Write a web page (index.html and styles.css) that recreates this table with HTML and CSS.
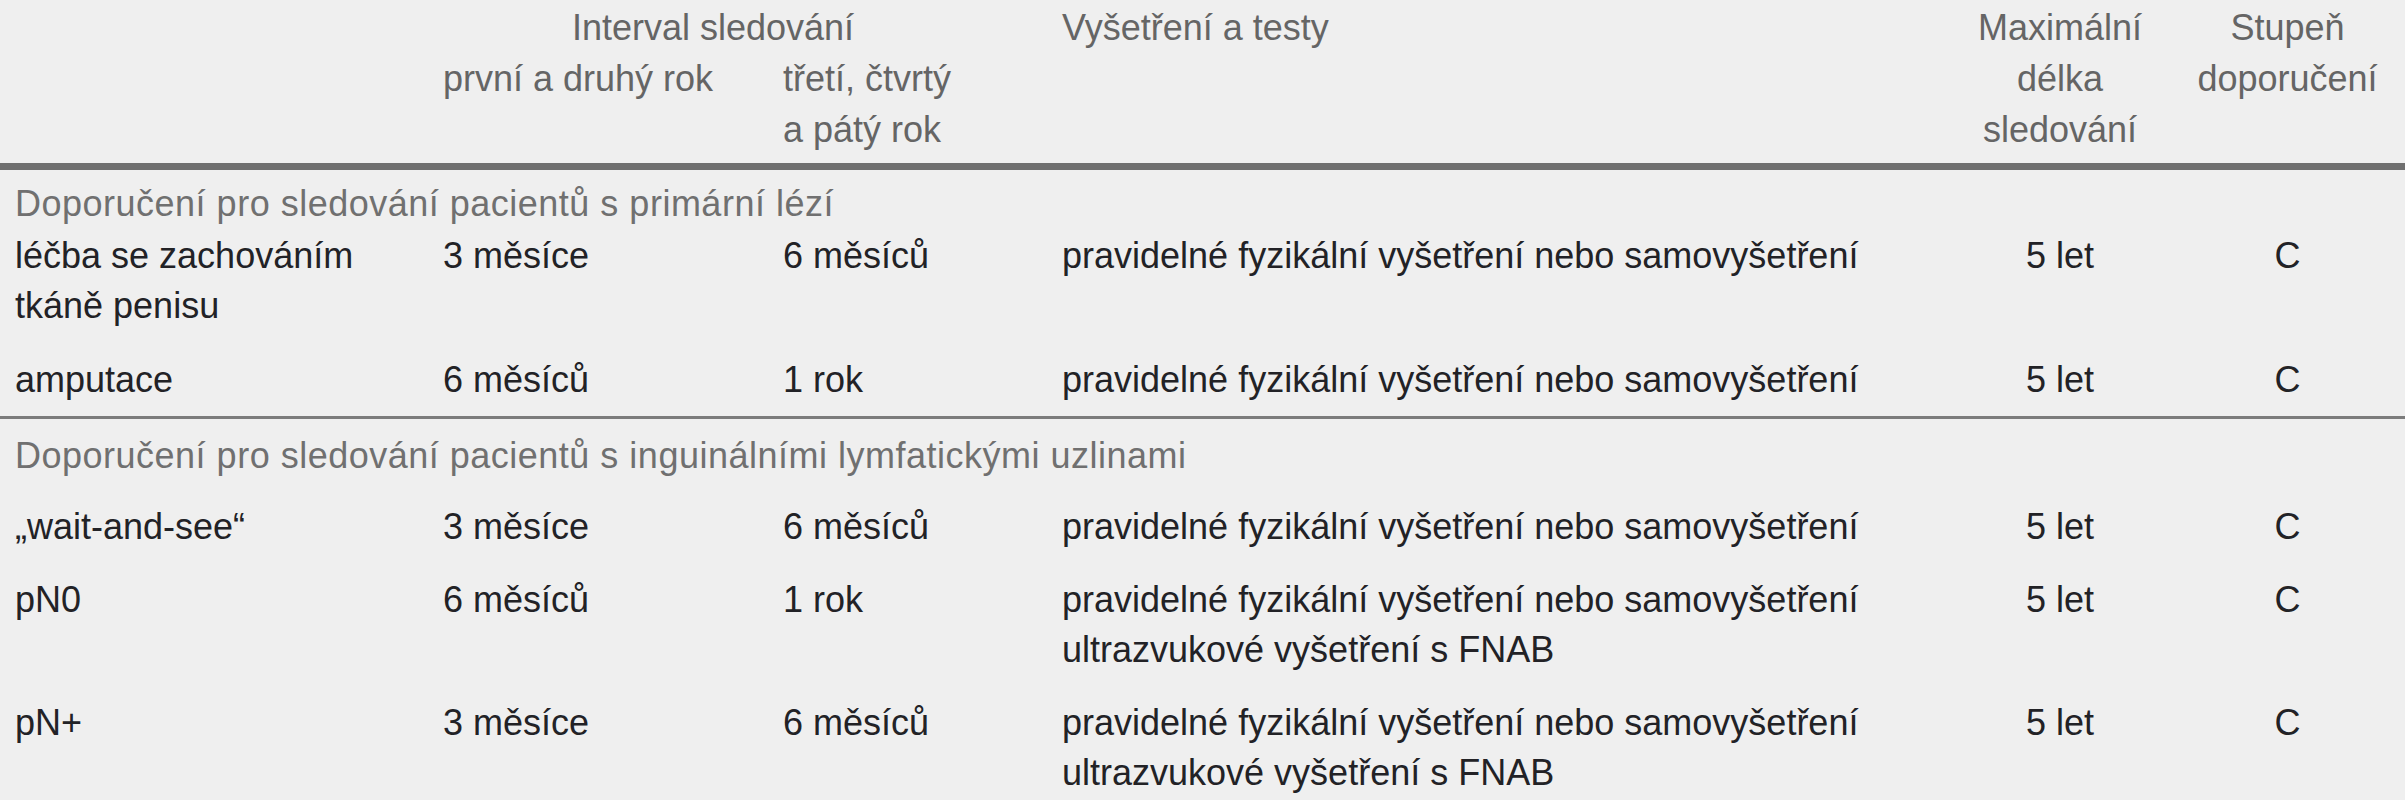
FILE: index.html
```html
<!DOCTYPE html>
<html lang="cs">
<head>
<meta charset="utf-8">
<title>Doporučení pro sledování</title>
<link rel="stylesheet" href="styles.css">
</head>
<body>
<table class="follow">
  <colgroup>
    <col class="c1"><col class="c2"><col class="c3"><col class="c4"><col class="c5"><col class="c6">
  </colgroup>
  <thead>
    <tr>
      <th rowspan="2" class="h-bottom"></th>
      <th colspan="2" class="h-top h-interval">Interval sledování</th>
      <th rowspan="2" class="h-top h-bottom">Vyšetření a testy</th>
      <th rowspan="2" class="h-top h-bottom h-center">Maximální<br>délka<br>sledování</th>
      <th rowspan="2" class="h-top h-bottom h-center h-last">Stupeň<br>doporučení</th>
    </tr>
    <tr>
      <th class="h-bottom">první a druhý rok</th>
      <th class="h-bottom">třetí, čtvrtý<br>a pátý rok</th>
    </tr>
  </thead>
  <tbody>
    <tr class="section first">
      <td colspan="6">Doporučení pro sledování pacientů s primární lézí</td>
    </tr>
    <tr class="row after-first">
      <td>léčba se zachováním<br>tkáně penisu</td>
      <td>3 měsíce</td>
      <td>6 měsíců</td>
      <td>pravidelné fyzikální vyšetření nebo samovyšetření</td>
      <td class="center">5 let</td>
      <td class="center last">C</td>
    </tr>
    <tr class="row">
      <td>amputace</td>
      <td>6 měsíců</td>
      <td>1 rok</td>
      <td>pravidelné fyzikální vyšetření nebo samovyšetření</td>
      <td class="center">5 let</td>
      <td class="center last">C</td>
    </tr>
    <tr class="section second">
      <td colspan="6">Doporučení pro sledování pacientů s inguinálními lymfatickými uzlinami</td>
    </tr>
    <tr class="row">
      <td>„wait-and-see“</td>
      <td>3 měsíce</td>
      <td>6 měsíců</td>
      <td>pravidelné fyzikální vyšetření nebo samovyšetření</td>
      <td class="center">5 let</td>
      <td class="center last">C</td>
    </tr>
    <tr class="row">
      <td>pN0</td>
      <td>6 měsíců</td>
      <td>1 rok</td>
      <td>pravidelné fyzikální vyšetření nebo samovyšetření<br>ultrazvukové vyšetření s FNAB</td>
      <td class="center">5 let</td>
      <td class="center last">C</td>
    </tr>
    <tr class="row final">
      <td>pN+</td>
      <td>3 měsíce</td>
      <td>6 měsíců</td>
      <td>pravidelné fyzikální vyšetření nebo samovyšetření<br>ultrazvukové vyšetření s FNAB</td>
      <td class="center">5 let</td>
      <td class="center last">C</td>
    </tr>
  </tbody>
</table>
</body>
</html>
```

FILE: styles.css
```css
html, body {
  margin: 0;
  padding: 0;
  background: #efefef;
}

body {
  font-family: "Liberation Sans", Arial, sans-serif;
  font-size: 36px;
  color: #222226;
}

.follow {
  width: 2405px;
  table-layout: fixed;
  border-collapse: separate;
  border-spacing: 0;
}

.c1 { width: 428px; }
.c2 { width: 340px; }
.c3 { width: 279px; }
.c4 { width: 913px; }
.c5 { width: 200px; }
.c6 { width: 245px; }

th, td {
  padding: 0 0 0 15px;
  text-align: left;
  vertical-align: top;
  white-space: nowrap;
}

thead th {
  font-weight: normal;
  color: #656565;
  line-height: 51px;
}

.h-top {
  padding-top: 2px;
}

.h-interval {
  text-align: center;
  padding-right: 64px;
}

.h-bottom {
  padding-bottom: 8px;
  border-bottom: 7px solid #6f6f6f;
}

.h-center {
  text-align: center;
  padding-left: 0;
}

.h-last {
  padding-left: 10px;
}

tbody td {
  line-height: 50px;
}

.section td {
  color: #707070;
  letter-spacing: 0.5px;
}

.section.first td {
  padding-top: 9px;
  padding-bottom: 0;
}

.section.second td {
  border-top: 3px solid #7c7c7c;
  padding-top: 12px;
  padding-bottom: 9px;
}

.row td {
  padding-top: 12px;
  padding-bottom: 11px;
}

.row.after-first td {
  padding-top: 2px;
  padding-bottom: 12px;
}

.row.final td {
  padding-bottom: 2px;
}

.center {
  text-align: center;
  padding-left: 0;
}

.center.last {
  padding-left: 10px;
}
```
